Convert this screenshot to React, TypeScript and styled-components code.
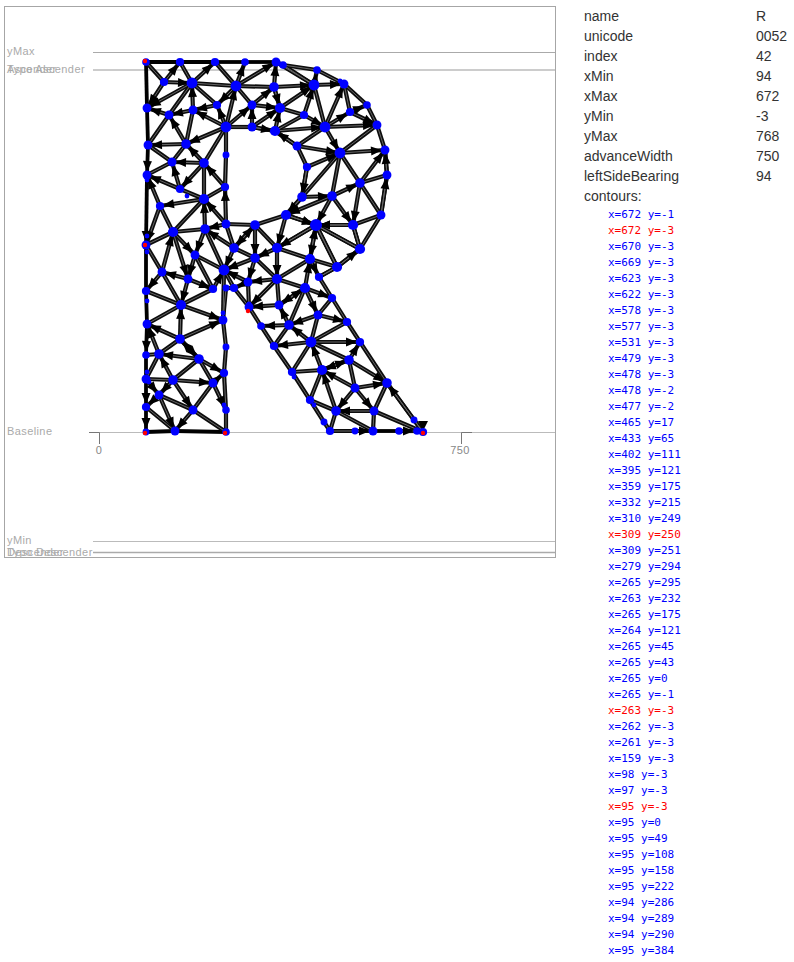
import React from 'react';
import styled, { createGlobalStyle } from 'styled-components';

const NODES: Record<string, [number, number]> = {
  A: [146, 62], B: [180, 62], C: [215, 62], D: [245, 62], E: [276, 62], E2: [283, 65], F: [317, 70], G: [344, 84],
  f: [164, 82], g: [192, 83], h: [236, 86], i: [274, 87], J: [314, 85],
  j: [147, 108], k: [169, 115], l: [193, 110], m: [217, 105], n: [252, 105], o: [280, 108], K: [304, 115], L: [350, 112], M: [367, 105],
  p: [226, 127], q: [252, 127], r: [275, 131], P: [325, 127], Q: [377, 125],
  s: [148, 145], t: [186, 144], R: [297, 146], S: [340, 153], T: [385, 150],
  u: [172, 162], v: [204, 163], w: [226, 155], U: [307, 167],
  x: [147, 175], V: [360, 183], W: [387, 175], y: [180, 189], z: [225, 187],
  aa: [204, 199], ab: [160, 206], X: [302, 197], Y: [332, 196], Z: [381, 215],
  ac: [226, 224], ad: [255, 225], af: [205, 229], ae: [173, 232], b1: [286, 215], b2: [316, 225], b3: [353, 225],
  ag: [146, 245], ah: [234, 248], ai: [277, 248], b4: [360, 249],
  ak: [195, 255], aj: [255, 258], b5: [310, 259], b6: [337, 267],
  al: [162, 272], am: [224, 270], b7: [319, 277], an: [188, 279], c1: [277, 279], c2: [248, 282],
  c3: [146, 291], c4: [213, 289], c5: [226, 288], c6: [234, 288], c7: [305, 288], c8: [332, 298],
  c9: [181, 305], d1: [279, 305], d2: [249, 307], d3: [223, 320], d4: [318, 315], d5: [347, 322], d6: [147, 324],
  d7: [261, 326], d8: [289, 325], d9: [180, 339], e1: [311, 342], e2: [360, 342], e3: [274, 346], e4: [226, 347],
  e5: [146, 355], e6: [159, 354], e7: [199, 359], e8: [349, 360], e9: [224, 373], f1: [292, 372], f2: [322, 370],
  f3: [146, 379], f4: [173, 380], f5: [213, 383], f6: [387, 383], f7: [355, 388], f8: [159, 395], f9: [310, 400],
  g1: [193, 410], g2: [146, 407], g3: [226, 410], g4: [336, 411], g5: [374, 411], g6: [324, 422], g7: [414, 420],
  g8: [146, 432], g9: [175, 431], h1: [226, 432], h2: [330, 431], h3: [355, 431], h4: [373, 431], h5: [399, 431], h6: [417, 431], h7: [423, 432],
};

const parseEdges = (list: string) =>
  list
    .trim()
    .split(/\s+/)
    .map((e) => {
      const arrow = e.includes('>');
      const [a, b] = e.split(/[->]/);
      return { a, b, arrow };
    });

// a>b has its arrow head at b, a-b has none
const STRAIGHT_EDGES = parseEdges(`
  A-B B-C C-D D-E h7-h6 h6-h5 h5-h4 h4-h3 h3-h2 h1-g9 g9-g8 g2>g8 f3>g2 e5-f3 d6>e5 c3-d6 ag-c3 x>ag s>x j-s A-j
`);

const EDGES = parseEdges(`
E-E2 E2-F F-G G-M M-Q Q-T T-W W-Z Z-b4 b4-b6 b6-b7 b7-c8 c8-d5 d5-e2 e2-f6 f6-g7 g7-h7
h2-g6 g6-f9 f9-f1 f1-e3 e3-d7 d7-d2 d2-c6 c6-c5 c5-d3 d3-e4 e4-e9 e9-g3 g3-h1
p-q q-r r-R R-U U-X X-b1 b1-ad ad-ac ac>z z-w w-p
A-f f>B B-g g>C C-h h>D h>E f>g f>j g>j k>j l>k m>l g-k g-m l>g h>m p>m p>h g-h h-i h-n p>n n>i p>l q>n n>o q>r r>o q>o
k-s t>k t-l p>t t>s s-u t-u v>t p-v v>u u-x y>u v>y y>x y-aa aa>ab v-aa z>v aa-z ab>x ab>ag ae-ab ae-ag
ac>aa aa-ae af>aa af-ae ae>ak af>ak ah>af ac>af ac-ah ad>ah ah>ad ad>aj ad-ai b1>ai aj-ah aj>am ah>am af-am ai>aj ai>c1
aj>c2 aj-c1 c2>am am-c6 c2>c6 c1>c2 c2-d2 c1>d2 d1>d2 c1-d1 c7>d1 d1>c7 c1-c7 ai-b5 ai-b2 b2>b5 b5>b2 c7>b5 b6-b5 b5-c1 b2-b6 b2-b4
b3>b2 b3-b4 b1>b2 b5>b7 b6>b4 b6-b7 c7>c8 c7>d4 c7-d8 c8-d4 d4>d5 d8>d1 d4>d8 d8>d7 d8-e3 e1>d8 e1>e3 e1>e2 d5-e1 d4-e1
f2>e1 e1-f1 e1-e8 e8>f6 e8>e2 e8>f2 f2>e8 f7>f2 f7-e8 f7>f6 f7>g4 f7>g5 g5-f6 g5-h7 g5>g4 g5-h4 g4>f2 f2-f1 f2-f9 f9-g4 g4-h2 g4-h4 h7>f6
ag-al al>c3 al>ae ae>an ak>an an>al an>c4 an>c9 al-c9 c3-c9 c9-d6 c9>d3 c9-c4 d9>c9 d9>d3 ak-am ak-c4 c4>am
d9>d6 d9-e6 d9>e7 e7>d9 e7>e6 e6>d6 e6-e5 e6-f3 f4>e6 f4-e7 f4-f3 f4>f5 f4>f8 e7>e9 e7-f5 f5>e9 f5-g1 f5>g3 f4>g1 f8-g1 g1-h1 g1>g9 f8>g9 f8>g2 f3>f8 g2-g9
i>E i>J J>G J>F E-J E2-J o>J o-i i>o o-K K>J K>P J-P P>G G-L L>M P>L L>Q P>Q K-r r>P R>r P-R R>S P>S S>T S-Q S-V U>S S-X S-Y
V>T W>T Z>W V-W Y>V V-Z V>b3 Z-b3 b3-b4 b3>b2 Y>b3 Y>b2 X>Y Y>b1 U>X b2-b4 b2-b6 b1>b2 X>b1 b2>ai
h2>h4 h5>h6 d3-am
`);

const ALL_EDGES = [...STRAIGHT_EDGES, ...EDGES];

const EXTRA_DOTS: [number, number][] = [
  [147, 180], [147, 236], [147, 252], [223, 313], [224, 405], [147, 372], [147, 301],
  [149, 382], [294, 377], [314, 405], [340, 81], [249, 304], [187, 196],
];
const RED_DOTS: [number, number][] = [
  [145, 61], [145, 245], [248, 311], [145, 433], [225, 433], [423, 433],
];

const GUIDES = [
  { y: 52.5, x1: 93, w: 1, c: '#aaa' },
  { y: 70, x1: 93, w: 1.6, c: '#bbb' },
  { y: 432.5, x1: 89, w: 1, c: '#bbb' },
  { y: 541.5, x1: 93, w: 1, c: '#bbb' },
  { y: 552.5, x1: 93, w: 1.6, c: '#aaa' },
];

const LABELS: [string, number][] = [
  ['yMax', 55],
  ['Ascender', 73],
  ['Typo Ascender', 73],
  ['Baseline', 435],
  ['yMin', 544],
  ['Descender', 556],
  ['Typo Descender', 556],
];

const FIELDS: [string, string][] = [
  ['name', 'R'],
  ['unicode', '0052'],
  ['index', '42'],
  ['xMin', '94'],
  ['xMax', '672'],
  ['yMin', '-3'],
  ['yMax', '768'],
  ['advanceWidth', '750'],
  ['leftSideBearing', '94'],
];

const CONTOUR: [number, number, boolean][] = [
  [672, -1, true], [672, -3, false], [670, -3, true], [669, -3, true], [623, -3, true], [622, -3, true],
  [578, -3, true], [577, -3, true], [531, -3, true], [479, -3, true], [478, -3, true], [478, -2, true],
  [477, -2, true], [465, 17, true], [433, 65, true], [402, 111, true], [395, 121, true], [359, 175, true],
  [332, 215, true], [310, 249, true], [309, 250, false], [309, 251, true], [279, 294, true], [265, 295, true],
  [263, 232, true], [265, 175, true], [264, 121, true], [265, 45, true], [265, 43, true], [265, 0, true],
  [265, -1, true], [263, -3, false], [262, -3, true], [261, -3, true], [159, -3, true], [98, -3, true],
  [97, -3, true], [95, -3, false], [95, 0, true], [95, 49, true], [95, 108, true], [95, 158, true],
  [95, 222, true], [94, 286, true], [94, 289, true], [94, 290, true], [95, 384, true],
];

const arrowHead = (ax: number, ay: number, bx: number, by: number) => {
  const len = Math.hypot(bx - ax, by - ay) || 1;
  const ux = (bx - ax) / len;
  const uy = (by - ay) / len;
  const tipX = bx - ux * 3;
  const tipY = by - uy * 3;
  const baseX = tipX - ux * 11;
  const baseY = tipY - uy * 11;
  return `${tipX},${tipY} ${baseX - uy * 4.5},${baseY + ux * 4.5} ${baseX + uy * 4.5},${baseY - ux * 4.5}`;
};

const degree = (name: string) =>
  ALL_EDGES.filter((e) => e.a === name || e.b === name).length;

const GlyphDrawing = () => (
  <svg width="550" height="550" viewBox="5 7 550 550">
    {GUIDES.map((g) => (
      <line key={g.y} x1={g.x1} x2={555} y1={g.y} y2={g.y} stroke={g.c} strokeWidth={g.w} />
    ))}
    <path d="M89 432.5H99.5V444" fill="none" stroke="#777" />
    <path d="M472 432.5H461.5V444" fill="none" stroke="#777" />
    {LABELS.map(([text, y]) => (
      <GuideLabel key={text} x={7} y={y}>
        {text}
      </GuideLabel>
    ))}
    <AxisLabel x={99} y={454}>0</AxisLabel>
    <AxisLabel x={460} y={454}>750</AxisLabel>
    {STRAIGHT_EDGES.map(({ a, b }) => (
      <line
        key={`s${a}${b}`}
        x1={NODES[a][0]} y1={NODES[a][1]} x2={NODES[b][0]} y2={NODES[b][1]}
        stroke="#000" strokeWidth={3.8}
      />
    ))}
    {EDGES.map(({ a, b }) => (
      <line
        key={`o${a}${b}`}
        x1={NODES[a][0]} y1={NODES[a][1]} x2={NODES[b][0]} y2={NODES[b][1]}
        stroke="#0c0c0c" strokeWidth={4.2}
      />
    ))}
    {EDGES.map(({ a, b }) => (
      <line
        key={`i${a}${b}`}
        x1={NODES[a][0]} y1={NODES[a][1]} x2={NODES[b][0]} y2={NODES[b][1]}
        stroke="#666" strokeWidth={1}
      />
    ))}
    {ALL_EDGES.filter((e) => e.arrow).map(({ a, b }) => (
      <polygon
        key={`a${a}${b}`}
        points={arrowHead(NODES[a][0], NODES[a][1], NODES[b][0], NODES[b][1])}
        fill="#000"
      />
    ))}
    <polygon points="418,421 428,421 423,431" fill="#000" />
    {Object.entries(NODES).map(([name, [cx, cy]]) => (
      <circle key={name} cx={cx} cy={cy} r={Math.min(6, 2.8 + degree(name) * 0.33)} fill="#00f" />
    ))}
    {EXTRA_DOTS.map(([cx, cy]) => (
      <circle key={`${cx}-${cy}`} cx={cx} cy={cy} r={2.4} fill="#00f" />
    ))}
    {RED_DOTS.map(([cx, cy]) => (
      <circle key={`${cx}-${cy}`} cx={cx} cy={cy} r={2.2} fill="#f00" />
    ))}
  </svg>
);

const App = () => (
  <>
    <GlobalStyle />
    <SPage>
      <SCanvas>
        <GlyphDrawing />
      </SCanvas>
      <SPanel>
        {FIELDS.map(([label, value]) => (
          <SField key={label}>
            <SLabel>{label}</SLabel>
            <span>{value}</span>
          </SField>
        ))}
        <SField>contours:</SField>
        <SContour>
          {CONTOUR.map(([x, y, on], idx) => (
            <SPoint key={idx} $on={on}>{`x=${x} y=${y}`}</SPoint>
          ))}
        </SContour>
      </SPanel>
    </SPage>
  </>
);

const GlobalStyle = createGlobalStyle`
  html, body {
    margin: 0;
    height: 962px;
    overflow: hidden;
    background: #fff;
  }
`;

const SPage = styled.div`
  display: flex;
  align-items: flex-start;
  gap: 28px;
  padding: 6px 0 0 4px;
`;

const SCanvas = styled.div`
  display: flex;
  flex: none;
  border: 1px solid #a6a6a6;
`;

const GuideLabel = styled.text`
  font-family: 'Liberation Sans', Arial, sans-serif;
  font-size: 11px;
  letter-spacing: 0.4px;
  fill: #aaa;
`;

const AxisLabel = styled.text`
  font-family: 'Liberation Sans', Arial, sans-serif;
  font-size: 11px;
  letter-spacing: 0.4px;
  text-anchor: middle;
  fill: #888;
`;

const SPanel = styled.div`
  font-family: 'Liberation Sans', Arial, sans-serif;
  font-size: 14px;
  line-height: 20px;
  color: #333;
`;

const SField = styled.div`
  display: flex;
  height: 20px;
`;

const SLabel = styled.span`
  width: 172px;
`;

const SContour = styled.div`
  padding: 1px 0 0 24px;
`;

const SPoint = styled.div<{ $on: boolean }>`
  font-family: 'DejaVu Sans Mono', monospace;
  font-size: 11px;
  line-height: 16px;
  color: ${({ $on }) => ($on ? '#00f' : '#f00')};
`;

export default App;
